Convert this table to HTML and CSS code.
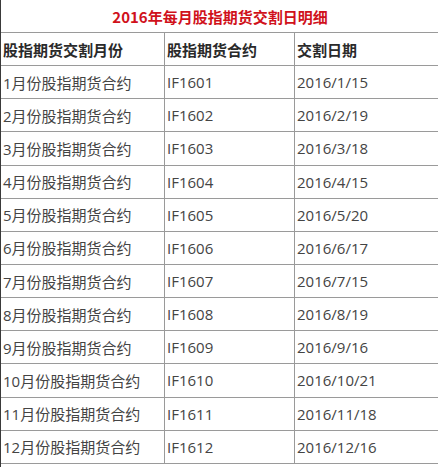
FILE: index.html
```html
<!DOCTYPE html>
<html lang="zh-CN">
<head>
<meta charset="utf-8">
<title>2016年每月股指期货交割日明细</title>
<link rel="stylesheet" href="styles.css">
</head>
<body>
<div class="page">
  <div class="title">2016年每月股指期货交割日明细</div>
  <div class="table">
    <div class="row head"><div class="c c1">股指期货交割月份</div><div class="c c2">股指期货合约</div><div class="c c3">交割日期</div></div>
    <div class="row"><div class="c c1">1月份股指期货合约</div><div class="c c2">IF1601</div><div class="c c3">2016/1/15</div></div>
    <div class="row"><div class="c c1">2月份股指期货合约</div><div class="c c2">IF1602</div><div class="c c3">2016/2/19</div></div>
    <div class="row"><div class="c c1">3月份股指期货合约</div><div class="c c2">IF1603</div><div class="c c3">2016/3/18</div></div>
    <div class="row"><div class="c c1">4月份股指期货合约</div><div class="c c2">IF1604</div><div class="c c3">2016/4/15</div></div>
    <div class="row"><div class="c c1">5月份股指期货合约</div><div class="c c2">IF1605</div><div class="c c3">2016/5/20</div></div>
    <div class="row"><div class="c c1">6月份股指期货合约</div><div class="c c2">IF1606</div><div class="c c3">2016/6/17</div></div>
    <div class="row"><div class="c c1">7月份股指期货合约</div><div class="c c2">IF1607</div><div class="c c3">2016/7/15</div></div>
    <div class="row"><div class="c c1">8月份股指期货合约</div><div class="c c2">IF1608</div><div class="c c3">2016/8/19</div></div>
    <div class="row"><div class="c c1">9月份股指期货合约</div><div class="c c2">IF1609</div><div class="c c3">2016/9/16</div></div>
    <div class="row"><div class="c c1">10月份股指期货合约</div><div class="c c2">IF1610</div><div class="c c3">2016/10/21</div></div>
    <div class="row"><div class="c c1">11月份股指期货合约</div><div class="c c2">IF1611</div><div class="c c3">2016/11/18</div></div>
    <div class="row"><div class="c c1">12月份股指期货合约</div><div class="c c2">IF1612</div><div class="c c3">2016/12/16</div></div>
  </div>
</div>
</body>
</html>
```
FILE: styles.css
```css
html, body {
  margin: 0;
  padding: 0;
  background: #fff;
}
.page {
  height: 467px;
  border-left: 1px solid #3a3a3a;
  box-sizing: border-box;
  font-family: "Open Sans", "Noto Sans CJK SC", sans-serif;
  font-size: 15px;
  color: #444;
}
.title {
  height: 32px;
  display: flex;
  align-items: center;
  justify-content: center;
  color: #d0111b;
  font-weight: bold;
  font-family: "Noto Sans CJK SC", sans-serif;
  font-size: 15px;
  padding-left: 1px;
}
.table {
  border-top: 1px solid #9a9a9a;
}
.row {
  display: flex;
  height: 33.15px;
  box-sizing: border-box;
  border-bottom: 1px solid #9a9a9a;
}
.c {
  display: flex;
  align-items: center;
  padding-left: 2px;
  box-sizing: border-box;
  white-space: nowrap;
}
.c1 { width: 163px; }
.c2 { width: 130px; border-left: 1px solid #9a9a9a; }
.c3 { flex: 1; border-left: 1px solid #9a9a9a; }
.c2, .c3 { padding-left: 2px; }
.head .c {
  font-weight: bold;
  color: #2a2a2a;
  font-family: "Noto Sans CJK SC", sans-serif;
}
```
